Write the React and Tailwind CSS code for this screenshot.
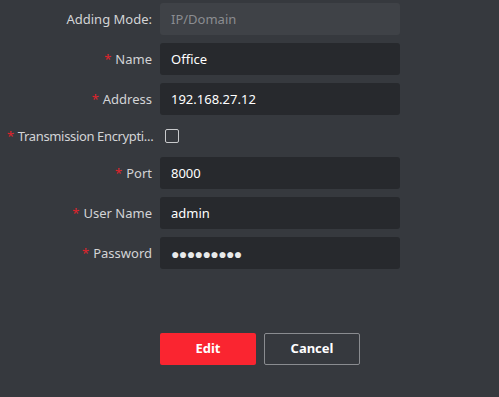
const FIELDS = [
  { label: "Name", value: "Office" },
  { label: "Address", value: "192.168.27.12" },
];

const FIELDS2 = [
  { label: "Port", value: "8000" },
  { label: "User Name", value: "admin" },
  { label: "Password", value: "●●●●●●●●●", password: true },
];

function Label({ children, required }) {
  return (
    <div className="w-[152px] shrink-0 text-right text-[13px] text-[#d3d4d6] whitespace-nowrap pt-px">
      {required && <span className="text-[#e0242c] mr-1">*</span>}
      {children}
    </div>
  );
}

function Row({ label, value, password }) {
  return (
    <div className="flex items-center gap-2 h-8">
      <Label required>{label}</Label>
      <div className="w-[240px] h-8 rounded-[3px] bg-[#27292d] flex items-center px-[11px] pt-px text-[13px] text-white">
        {password ? <span className="text-[14px] tracking-[-0.6px] text-[#e8e9ea]">{value}</span> : value}
      </div>
    </div>
  );
}

export default function App() {
  return (
    <div
      className="w-[499px] h-[397px] bg-[#36393e] pt-[3px]"
      style={{ fontFamily: '"Noto Sans", "Open Sans", sans-serif' }}
    >
      <div className="flex flex-col gap-2">
        <div className="flex items-center gap-2 h-8">
          <Label>Adding Mode:</Label>
          <div className="w-[240px] h-8 rounded-[3px] bg-[#3f4247] flex items-center px-[11px] pt-px text-[13px] text-[#8b8d91]">
            IP/Domain
          </div>
        </div>
        {FIELDS.map((f) => (
          <Row key={f.label} {...f} />
        ))}
        <div className="flex items-center gap-2 h-[26px]">
          <div className="w-[152px] shrink-0 pl-[7px] text-[13px] tracking-[-0.35px] text-[#d3d4d6] whitespace-nowrap pt-px">
            <span className="text-[#e0242c] mr-1">*</span>
            Transmission Encrypti...
          </div>
          <div className="ml-[5px] w-[14px] h-[14px] rounded-[2px] border border-[#c9cacc]" />
        </div>
        {FIELDS2.map((f) => (
          <Row key={f.label} {...f} />
        ))}
      </div>
      <div className="flex gap-2 pl-[160px] mt-[64px]">
        <button className="w-[96px] h-8 rounded-[2px] bg-[#fa2530] text-white text-[13px] font-bold">
          Edit
        </button>
        <button className="w-[96px] h-8 rounded-[2px] border border-[#8a8c90] text-white text-[13px] font-bold">
          Cancel
        </button>
      </div>
    </div>
  );
}
